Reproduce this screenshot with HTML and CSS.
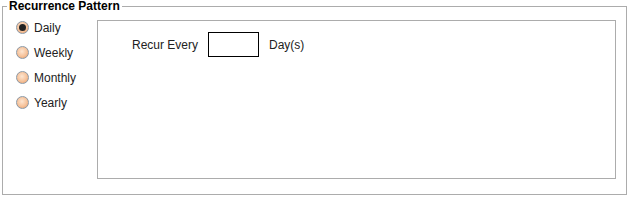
FILE: index.html
```html
<!DOCTYPE html>
<html>
<head>
<meta charset="utf-8">
<link rel="stylesheet" href="styles.css">
</head>
<body>
<fieldset class="pattern">
  <legend class="pattern-title">Recurrence Pattern</legend>
  <div class="pattern-body">
    <div class="options">
      <label class="option"><input type="radio" name="rec" class="radio" checked><span>Daily</span></label>
      <label class="option"><input type="radio" name="rec" class="radio"><span>Weekly</span></label>
      <label class="option"><input type="radio" name="rec" class="radio"><span>Monthly</span></label>
      <label class="option"><input type="radio" name="rec" class="radio"><span>Yearly</span></label>
    </div>
    <div class="detail">
      <div class="recur-row">
        <span>Recur Every</span>
        <input type="text" class="num">
        <span>Day(s)</span>
      </div>
    </div>
  </div>
</fieldset>
</body>
</html>
```
FILE: styles.css
```css
html, body {
  margin: 0;
  padding: 0;
  background: #fff;
}
body {
  font-family: "Liberation Sans", Arial, sans-serif;
  font-size: 12px;
  color: #222;
}
.pattern {
  margin: 0 2px;
  padding: 1px 10px 15px 4px;
  border: 1px solid #acacac;
}
.pattern-title {
  padding: 0 2px;
  font-weight: bold;
  font-size: 12px;
  line-height: 12px;
  color: #000;
}
.pattern-body {
  display: grid;
  grid-template-columns: 90px 519px;
  align-items: start;
}
.options {
  display: flex;
  flex-direction: column;
  padding-left: 9px;
  padding-top: 2px;
}
.option {
  display: flex;
  align-items: center;
  height: 25px;
  gap: 5px;
}
.radio {
  appearance: none;
  -webkit-appearance: none;
  margin: 0;
  width: 13px;
  height: 13px;
  border-radius: 50%;
  border: 1px solid #8c99a6;
  background: radial-gradient(circle at 45% 40%, #fde6d2 0%, #f6c29a 55%, #e49a66 100%);
  box-sizing: border-box;
  position: relative;
}
.radio:checked::after {
  content: "";
  position: absolute;
  left: 2px;
  top: 2px;
  width: 7px;
  height: 7px;
  border-radius: 50%;
  background: #222;
}
.detail {
  margin-top: 7px;
  height: 159px;
  border: 1px solid #acacac;
  box-sizing: border-box;
  padding: 11px 0 0 34px;
}
.recur-row {
  display: flex;
  align-items: center;
  gap: 10px;
}
.num {
  width: 51px;
  height: 25px;
  box-sizing: border-box;
  border: 1px solid #000;
  margin: 0;
  padding: 0;
  font: inherit;
}
```
